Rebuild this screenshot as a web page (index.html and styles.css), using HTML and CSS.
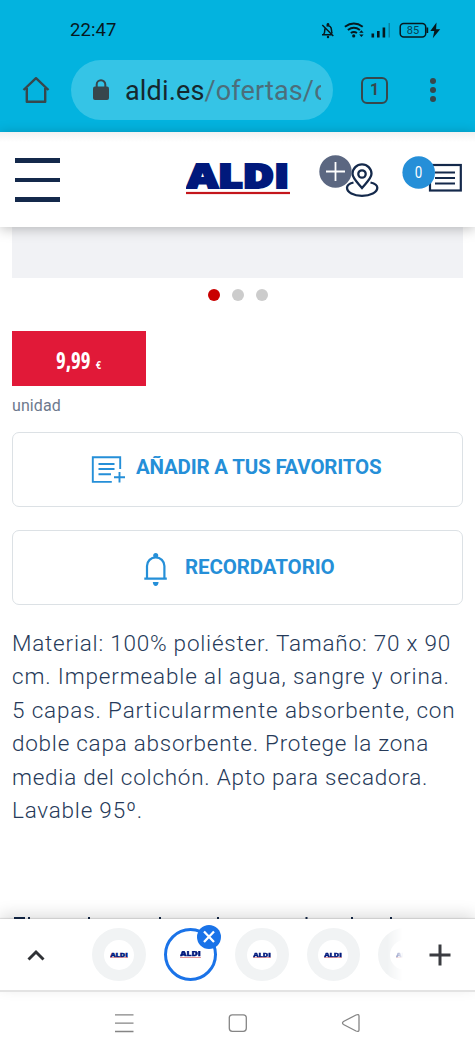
FILE: index.html
```html
<!DOCTYPE html>
<html lang="es">
<head>
<meta charset="utf-8">
<title>ALDI</title>
<link rel="stylesheet" href="styles.css">
</head>
<body>
<div class="phone">
  <header class="browser">
    <div class="status">
      <span class="clock">22:47</span>
      <svg class="status-icons" width="122" height="20" viewBox="320 20 122 20">
        <g fill="none" stroke="#07181d" stroke-width="1.5">
          <path d="M322 34.800h9.500M323.500 34.500q1.200-1 1.200-3.500 0-2 .6-3M326.500 26q4.700-1 5 4 0 2.500 .8 3.500M322.300 25l11 11"/>
          <path d="M344.900 26.800q9-6.500 17.800 0M347.900 30q6-4.300 12 0M350.800 33q3.100-2 6.200 0" stroke-width="2"/>
          <rect x="400.200" y="23.400" width="25.500" height="13.500" rx="3.500"/>
        </g>
        <g fill="#07181d">
          <circle cx="328" cy="24.300" r="1.300"/><circle cx="328" cy="37" r="1.200"/>
          <circle cx="353.700" cy="35.900" r="1.600"/><path d="M359.200 32.700l2.200-2.500 2.200 2.500zM359.200 34.500l2.200 2.500 2.200-2.500z"/>
          <rect x="371.500" y="33.500" width="2.600" height="4"/><rect x="377" y="31" width="2.600" height="6.500"/><rect x="382.600" y="27.500" width="2.600" height="10"/>
          <rect x="388.500" y="23" width="1.500" height="14.500" opacity=".3"/>
          <rect x="426.500" y="27.500" width="1.700" height="5.500"/>
          <path d="M436.500 22.500l-6.200 8.500h4l-1.500 7.200 7.400-9h-4.100z"/>
        </g>
        <text x="406.800" y="34" class="battery">85</text>
      </svg>
    </div>
    <div class="toolbar">
      <svg class="home" width="28" height="28" viewBox="0 0 28 28"><path d="M1.500 14L14 2.200 26.500 14M4.800 12v13.800h18.400V12" fill="none" stroke="#37474c" stroke-width="2.400" stroke-linejoin="round"/></svg>
      <div class="url">
        <svg width="18" height="22" viewBox="0 0 18 22"><rect x="1" y="7.500" width="16" height="13.500" rx="2" fill="#37474c"/><path d="M4.700 9V5.500a4.300 4.300 0 0 1 8.600 0V9" fill="none" stroke="#37474c" stroke-width="2"/></svg>
        <div class="address">aldi.es<span>/ofertas/c</span></div>
      </div>
      <span class="tabs">1</span>
      <svg width="8" height="26" viewBox="0 0 8 26" fill="#37474c"><circle cx="4" cy="4" r="3"/><circle cx="4" cy="13" r="3"/><circle cx="4" cy="22" r="3"/></svg>
    </div>
  </header>

  <nav class="site-header">
    <div class="burger"><i></i><i></i><i></i></div>
    <svg class="brand" width="104" height="32" viewBox="0 0 104 32">
      <g id="aldi">
        <text x="1" y="25" textLength="102" lengthAdjust="spacingAndGlyphs" class="logo-text">ALDI</text>
        <rect x="0" y="28.900" width="104" height="2.200" fill="#c4161c"/>
      </g>
    </svg>
    <svg class="stores" width="62" height="46" viewBox="318 153 62 46">
      <g fill="none" stroke="#14294b" stroke-width="2.300">
        <path d="M362 188c-5.500-6.500-9.500-10-9.500-14.200a9.500 9.500 0 0 1 19 0c0 4.200-4 7.700-9.500 14.200z"/>
        <circle cx="362" cy="174" r="3.700"/>
        <path d="M353.500 182.500c-4 1-6.500 3-6.500 5.300 0 4.500 6.500 8 15 8s15.300-3.500 15.300-8c0-2.300-2.500-4.300-6.800-5.300"/>
      </g>
      <circle cx="335.500" cy="171.500" r="16.200" fill="#5b6781"/>
      <path d="M326 171.500h19M335.500 162v19" stroke="#fff" stroke-width="1.800"/>
    </svg>
    <svg class="lists" width="62" height="40" viewBox="401 154 62 40">
      <rect x="430" y="165" width="30.800" height="25.500" fill="#fff" stroke="#14294b" stroke-width="2.200"/>
      <path d="M435 172.500h20M435 178h20M435 183.500h20" stroke="#14294b" stroke-width="2"/>
      <circle cx="418.700" cy="172.500" r="16.300" fill="#258fd8"/>
      <text x="414.800" y="178" class="count" textLength="7.500" lengthAdjust="spacingAndGlyphs">0</text>
    </svg>
  </nav>

  <main class="page">
    <div class="gallery"></div>
    <div class="dots"><i class="on"></i><i></i><i></i></div>
    <div class="price"><span class="amount">9,99</span><span class="euro">€</span></div>
    <div class="unit">unidad</div>
    <div class="action favorites">
      <svg width="34" height="30" viewBox="91 455 34 30" fill="none" stroke="#258fd8" stroke-width="1.900"><path d="M120.200 469v-11.700H92.800v24.600h19M98.500 464h16M98.500 469h16M98.500 474.200h12.500M114 477.300h11M119.500 472v10.500"/></svg>
      <span>AÑADIR A TUS FAVORITOS</span>
    </div>
    <div class="action reminder">
      <svg width="24" height="34" viewBox="145 552 24 34"><path d="M148 578.500v-12.500a8.700 8.700 0 0 1 17.400 0v12.500M145.300 578.700h22.500" fill="none" stroke="#258fd8" stroke-width="2.200"/><circle cx="156.700" cy="555.600" r="2.500" fill="#258fd8"/><path d="M153.800 582h5.800q-.4 4-2.900 4t-2.900-4z" fill="#258fd8"/></svg>
      <span>RECORDATORIO</span>
    </div>
    <div class="description">
      <div class="l1">Material: 100% poliéster. Tamaño: 70 x 90</div>
      <div class="l2">cm. Impermeable al agua, sangre y orina.</div>
      <div class="l3">5 capas. Particularmente absorbente, con</div>
      <div class="l4">doble capa absorbente. Protege la zona</div>
      <div class="l5">media del colchón. Apto para secadora.</div>
      <div class="l6">Lavable 95º.</div>
    </div>
    <svg class="cut-line" width="475" height="2" viewBox="0 0 475 2" fill="#14294b"><path d="M14 0h11v2H14zM28 0h2v2h-2zM88 0h2v2h-2zM159 0h2v2h-2zM217 0h2v2h-2zM305.500 0h2v2h-2zM351 0h2v2h-2zM390 0h2v2h-2z"/></svg>
  </main>

  <section class="tabstrip">
    <svg class="chevron" width="20" height="14" viewBox="0 0 20 14"><path d="M2.500 11.500L10 4l7.500 7.500" fill="none" stroke="#303236" stroke-width="2.900"/></svg>
    <div class="favicons">
      <div class="tab"><b><svg width="18" height="6" viewBox="0 0 104 32"><use href="#aldi"/></svg></b></div>
      <div class="tab active"><b><svg width="21" height="7" viewBox="0 0 104 32"><use href="#aldi"/></svg></b>
        <svg class="close" width="24" height="24" viewBox="0 0 24 24"><circle cx="12" cy="12" r="12" fill="#1a73e8"/><path d="M7 6.500l10 10.500M17 6.500L7 17" stroke="#fff" stroke-width="2.300"/></svg>
      </div>
      <div class="tab"><b><svg width="18" height="6" viewBox="0 0 104 32"><use href="#aldi"/></svg></b></div>
      <div class="tab"><b><svg width="18" height="6" viewBox="0 0 104 32"><use href="#aldi"/></svg></b></div>
      <div class="tab"><b><svg width="18" height="6" viewBox="0 0 104 32"><use href="#aldi"/></svg></b></div>
    </div>
    <svg class="plus" width="22" height="22" viewBox="0 0 22 22"><path d="M.5 11h21M11 .5v21" stroke="#3a3c41" stroke-width="3"/></svg>
  </section>
  <footer class="navbar">
    <svg width="250" height="22" viewBox="113 1012 250 22" fill="none" stroke="#858585" stroke-width="1.300">
      <path d="M115 1014.800h18.500M115 1023.200h18.500M115 1031.500h18.500"/>
      <rect x="229.300" y="1014.800" width="17" height="16.500" rx="3"/>
      <path d="M343.500 1021.500q-2 1.500 0 3l12.500 6.500q3 1.200 3-1v-14q0-2.200-3-1z"/>
    </svg>
  </footer>
</div>
</body>
</html>
```
FILE: styles.css
```css
* { box-sizing: border-box; }
body { margin: 0; background: #fff; font-family: Roboto, "Liberation Sans", sans-serif; }
svg { display: block; flex: none; }
.phone { width: 475px; height: 1056px; display: flex; flex-direction: column; overflow: hidden; }
.logo-text { font: 800 33px "Open Sans", Roboto, sans-serif; fill: #00197c; stroke: #00197c; stroke-width: 2.2px; }

.browser { height: 132px; background: #03b3df; flex: none; }
.status { height: 60px; display: flex; justify-content: space-between; padding: 20px 33px 0 70px; }
.clock { font-size: 18.500px; line-height: 21px; color: #07181d; letter-spacing: .1px; }
.battery { font: 11px Roboto, sans-serif; fill: #07404f; }
.toolbar { height: 60px; display: flex; align-items: center; padding-left: 22px; }
.url { width: 262px; height: 60px; margin-left: 21px; border-radius: 30px; background: #35c4e6; display: flex; align-items: center; padding-left: 21px; }
.address { width: 196px; margin-left: 15px; overflow: hidden; white-space: nowrap; font-size: 27px; line-height: 34px; color: #15282e; letter-spacing: .15px; padding-top: 2px; }
.address span { color: #4c6e7b; }
.tabs { width: 27px; height: 27px; margin: 0 41px 0 28px; border: 2.500px solid #37474c; border-radius: 6px; text-align: center; font: 700 16px/22px Roboto, sans-serif; color: #37474c; }

.site-header { position: relative; height: 95px; flex: none; display: flex; padding-left: 15px; background: linear-gradient(#f1f1f1, #fff 10px); box-shadow: 0 2px 12px rgba(0,0,0,.25); z-index: 1; }
.burger { width: 45px; padding-top: 26px; display: flex; flex-direction: column; gap: 15px; }
.burger i { height: 4.500px; background: #14294b; }
.brand { margin: 31px 0 0 126px; }
.stores { margin: 21px 0 0 28px; }
.lists { margin: 22px 0 0 21px; }
.count { font: 16px Roboto, sans-serif; fill: #fff; }

.page { height: 692px; flex: none; padding: 0 12px; overflow: hidden; display: flex; flex-direction: column; }
.gallery { height: 51px; flex: none; background: #f1f2f5; }
.dots { display: flex; gap: 12px; padding: 11px 0 0 196px; }
.dots i { width: 12px; height: 12px; border-radius: 50%; background: #ccc; }
.dots .on { background: #c90000; }
.price { width: 134px; height: 55px; margin-top: 30px; flex: none; background: #e11938; color: #fff; display: flex; align-items: baseline; padding: 15px 0 0 44px; font-family: "Open Sans", Roboto, sans-serif; font-stretch: 75%; font-weight: 700; }
.amount { width: 34px; font-size: 23px; line-height: 29px; transform: scaleX(.9); transform-origin: left; }
.euro { margin-left: 6px; font-size: 11px; }
.unit { height: 46px; padding-top: 10px; font-size: 16px; line-height: 20px; color: #6d798d; letter-spacing: .1px; }
.action { height: 75px; margin-bottom: 23px; flex: none; border: 1.500px solid #dce1e5; border-radius: 7px; display: flex; align-items: center; color: #258fd8; font-size: 20.500px; font-weight: 700; white-space: nowrap; }
.action span { line-height: 26px; margin-top: -6px; }
.favorites { padding-left: 78px; gap: 11px; }
.reminder { padding-left: 131px; gap: 17px; }
.reminder svg { margin-top: 3px; }
.reminder span { margin-top: -2px; letter-spacing: -.1px; }
.favorites span { letter-spacing: -.2px; }
.description { margin-top: -1px; font-size: 22.500px; line-height: 33.400px; color: #263a59; white-space: nowrap; letter-spacing: .78px; font-weight: 350; }
.l2, .l3 { letter-spacing: .85px; }
.l4, .l5 { letter-spacing: .75px; }
.cut-line { margin: auto 0 0 -12px; }

.tabstrip { position: relative; height: 73px; flex: none; display: flex; align-items: center; background: #fff; border-bottom: 2px solid #e3e3e3; box-shadow: 0 -1px 1px rgba(0,0,0,.1), 0 -5px 14px rgba(0,0,0,.13); padding-left: 26px; z-index: 0; }
.page { position: relative; }
.cut-line { position: relative; }
.favicons { width: 320px; margin-left: 46px; display: flex; gap: 18px; overflow: hidden; height: 71px; align-items: center; -webkit-mask-image: linear-gradient(90deg, #000 295px, transparent 311px); mask-image: linear-gradient(90deg, #000 295px, transparent 311px); }
.tab { position: relative; width: 53.500px; height: 53.500px; flex: none; border-radius: 50%; background: #f1f3f4; display: flex; align-items: center; justify-content: center; }
.tab b { width: 30px; height: 30px; border-radius: 50%; background: #fff; display: flex; align-items: center; justify-content: center; }
.active { border: 3px solid #1a73e8; background: #fff; }
.close { position: absolute; right: -7px; top: -6px; }
.plus { margin-left: 17px; }
.navbar { flex: 1; padding: 20px 0 0 113px; }
```
